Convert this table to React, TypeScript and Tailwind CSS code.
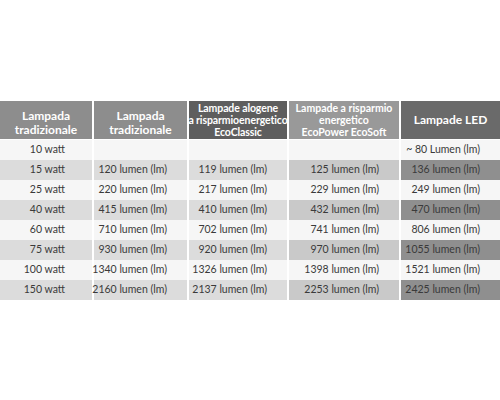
const headers = [
  { lines: ['Lampada', 'tradizionale'], bg: 'bg-[#8d8d8d]', size: 'text-[12px] leading-[14px] pt-[5px]' },
  { lines: ['Lampada', 'tradizionale'], bg: 'bg-[#8d8d8d]', size: 'text-[12px] leading-[14px] pt-[5px]' },
  { lines: ['Lampade alogene', 'a risparmioenergetico', 'EcoClassic'], bg: 'bg-[#5e5e5e]', size: 'text-[10.5px] leading-[12px] tracking-[-0.1px]' },
  { lines: ['Lampade a risparmio', 'energetico', 'EcoPower EcoSoft'], bg: 'bg-[#999999]', size: 'text-[10.5px] leading-[12px]' },
  { lines: ['Lampade LED'], bg: 'bg-[#6a6a6a]', size: 'text-[12px] leading-[14px]' },
];

const rows = [
  ['10 watt', '', '', '', '~ 80 Lumen (lm)'],
  ['15 watt', '120 lumen (lm)', '119 lumen (lm)', '125 lumen (lm)', '136 lumen (lm)'],
  ['25 watt', '220 lumen (lm)', '217 lumen (lm)', '229 lumen (lm)', '249 lumen (lm)'],
  ['40 watt', '415 lumen (lm)', '410 lumen (lm)', '432 lumen (lm)', '470 lumen (lm)'],
  ['60 watt', '710 lumen (lm)', '702 lumen (lm)', '741 lumen (lm)', '806 lumen (lm)'],
  ['75 watt', '930 lumen (lm)', '920 lumen (lm)', '970 lumen (lm)', '1055 lumen (lm)'],
  ['100 watt', '1340 lumen (lm)', '1326 lumen (lm)', '1398 lumen (lm)', '1521 lumen (lm)'],
  ['150 watt', '2160 lumen (lm)', '2137 lumen (lm)', '2253 lumen (lm)', '2425 lumen (lm)'],
];

// shaded rows: col1-3 light grey, col4 mid grey, col5 dark grey
const shaded = ['bg-[#dcdcdc]', 'bg-[#dcdcdc]', 'bg-[#dcdcdc]', 'bg-[#c9c9c9]', 'bg-[#8f8f8f]'];
const padRight = ['pr-[27px]', 'pr-[20px]', 'pr-[20px]', 'pr-[20px]', 'pr-[20px]'];

export default function App() {
  return (
    <div className="w-[500px] h-[400px] bg-white pt-[101px] font-['Lato','Open_Sans',sans-serif]">
      <div className="grid grid-cols-[92px_93px_98px_110px_99px] gap-x-[2px]">
        {headers.map((h, i) => (
          <div
            key={i}
            className={`${h.bg} ${h.size} h-[38px] flex flex-col items-center justify-center text-white font-bold text-center whitespace-nowrap`}
          >
            {h.lines.map((l) => (
              <span key={l}>{l}</span>
            ))}
          </div>
        ))}
      </div>
      <div className="mt-[1px]">
        {rows.map((r, ri) => (
          <div key={ri} className="grid grid-cols-[92px_93px_98px_110px_99px] gap-x-[2px]">
            {r.map((c, ci) => (
              <div
                key={ci}
                className={`${ri % 2 === 1 ? shaded[ci] : 'bg-[#f6f6f6]'} ${padRight[ci]} h-[20px] flex items-center justify-end whitespace-nowrap text-[10.5px] text-[#3a3a3a]`}
              >
                {c}
              </div>
            ))}
          </div>
        ))}
      </div>
    </div>
  );
}
